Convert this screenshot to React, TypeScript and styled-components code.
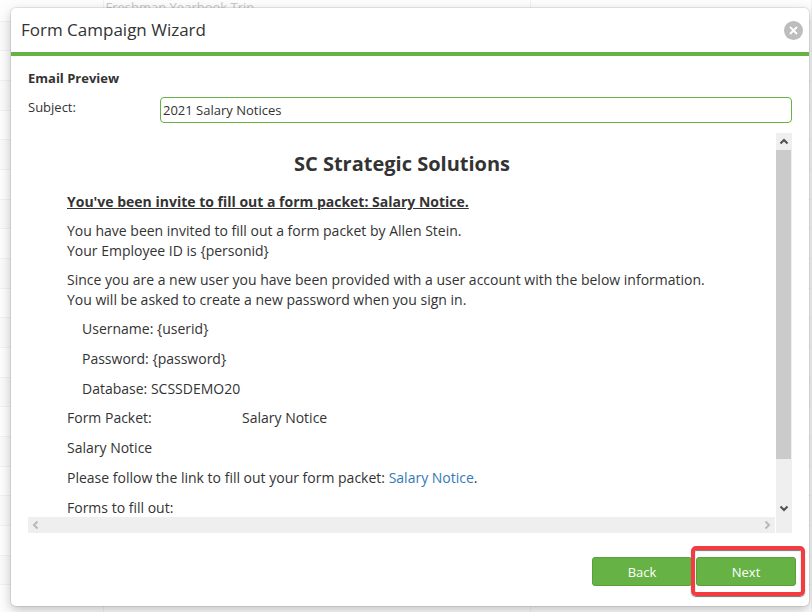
import React, { useState } from "react";
import styled, { createGlobalStyle } from "styled-components";

const green = "#66b245";
const ink = "#333333";

const GlobalStyle = createGlobalStyle`
  *, *::before, *::after { box-sizing: border-box; }
  html, body, #root { height: 100%; margin: 0; }
  body {
    overflow: hidden;
    background: #fdfdfd;
    color: ${ink};
    font-family: "Open Sans", "Noto Sans", sans-serif;
    font-size: 14px;
    line-height: 20px;
  }
  h1, h2, h3, p, dl, dd { margin: 0; }
`;

const Screen = styled.div`
  position: relative;
  height: 100%;
  overflow: hidden;
`;

const Backdrop = styled.div`
  height: 100%;
  overflow: hidden;
  display: flex;
  flex-direction: column;
  justify-content: flex-end;
`;

const ListTable = styled.table`
  width: 100%;
  margin-bottom: -3px;
  border-collapse: collapse;
  table-layout: fixed;
  font-size: 13px;
  color: #c8c8c8;

  tr { height: 30px; }
  tr:nth-child(3n) { height: 29px; }
  tr:nth-child(odd) { background: #fafafa; }
  td {
    padding: 0 2px;
    line-height: 16px;
    border-bottom: 1px solid #f1f1f1;
    border-right: 1px solid #f1f1f1;
    white-space: nowrap;
  }
  td:first-child { width: 103px; }
  td:nth-child(2) { width: 427px; }
`;

const Overlay = styled.div`
  position: absolute;
  inset: 0;
  display: flex;
  padding: 8px 3px 6px 11px;
`;

const Dialog = styled.section`
  flex: 1;
  min-width: 0;
  display: flex;
  flex-direction: column;
  background: #fff;
  border-radius: 5px;
  box-shadow: 0 0 0 1px rgba(0, 0, 0, 0.08), 0 4px 12px rgba(0, 0, 0, 0.24);
`;

const Header = styled.header`
  display: flex;
  align-items: center;
  justify-content: space-between;
  height: 48px;
  padding: 0 6px 0 10px;
  border-bottom: 4px solid ${green};
`;

const Title = styled.h1`
  font-size: 17px;
  line-height: 24px;
  font-weight: 400;
`;

const CloseButton = styled.button`
  display: flex;
  padding: 0;
  border: 0;
  background: none;
  cursor: pointer;
`;

const Body = styled.div`
  flex: 1;
  min-height: 0;
  display: flex;
  flex-direction: column;
  gap: 10px;
  padding: 13px 17px 0;
`;

const SectionTitle = styled.h2`
  font-size: 13px;
  line-height: 18px;
  font-weight: 700;
`;

const Field = styled.div`
  display: grid;
  grid-template-columns: 132px 1fr;
  align-items: start;
`;

const Label = styled.label`
  font-size: 13px;
  line-height: 20px;
`;

const SubjectInput = styled.input`
  width: 100%;
  height: 26px;
  padding: 0 2px;
  border: 1px solid ${green};
  border-radius: 4px;
  outline: none;
  background: #fff;
  color: ${ink};
  font: inherit;
  font-size: 13px;
`;

const Preview = styled.div`
  flex: 1;
  min-height: 0;
  display: grid;
  grid-template-columns: minmax(0, 1fr) 16px;
  grid-template-rows: minmax(0, 1fr) 16px;
`;

const Email = styled.article`
  overflow: hidden;
  display: flex;
  flex-direction: column;
  gap: 9px;
  padding: 17px 39px 0;
`;

const Company = styled.h2`
  margin-bottom: 5px;
  font-size: 20px;
  line-height: 28px;
  font-weight: 700;
  text-align: center;
`;

const Invite = styled.h3`
  font-size: 14px;
  line-height: 20px;
  font-weight: 700;
  text-decoration: underline;
`;

const Group = styled.div<{ $indent?: boolean }>`
  display: flex;
  flex-direction: column;
  gap: 10px;
  padding-left: ${(p) => (p.$indent ? "15px" : "0")};
`;

const PacketRow = styled.dl`
  display: grid;
  grid-template-columns: 175px 1fr;
`;

const Link = styled.a`
  color: #337ab7;
  text-decoration: none;
`;

const VerticalTrack = styled.div`
  grid-row: 1 / 3;
  grid-column: 2;
  display: flex;
  flex-direction: column;
  align-items: center;
  background: #efefef;
  padding: 1px 0 17px;
`;

const Thumb = styled.div`
  flex: 309;
  width: 100%;
  border-right: 1px solid #efefef;
  background: #cbcbcb;
`;

const TrackSpace = styled.div`
  flex: 41;
`;

const HorizontalTrack = styled.div`
  display: flex;
  justify-content: space-between;
  background: #efefef;
  border-right: 1px solid #fff;
`;

const ArrowBox = styled.button<{ $muted?: boolean }>`
  flex: none;
  display: flex;
  align-items: center;
  justify-content: center;
  width: 16px;
  height: 16px;
  padding: 0;
  border: 0;
  background: none;
  color: ${(p) => (p.$muted ? "#b9b9b9" : "#505050")};
`;

const Footer = styled.footer`
  display: flex;
  justify-content: flex-end;
  gap: 4px;
  padding: 24px 13px 20px;
`;

const ActionButton = styled.button`
  width: 100px;
  height: 29px;
  padding: 0;
  border: 1px solid #58a038;
  border-radius: 3px;
  background: ${green};
  color: #fff;
  font: inherit;
  font-size: 13px;
  cursor: pointer;
`;

const Highlighted = styled.div`
  position: relative;
  display: flex;

  &::after {
    content: "";
    position: absolute;
    inset: -11px -9px -10px -5px;
    border: 4px solid #f43b3f;
    border-radius: 5px;
    box-shadow: 0 1px 1px #777, inset 0 1px 1px #777;
    pointer-events: none;
  }
`;

const arrows = {
  up: "M1.5 6.5 L5 3 L8.5 6.5",
  down: "M1.5 3.5 L5 7 L8.5 3.5",
  left: "M6.5 1.5 L3 5 L6.5 8.5",
  right: "M3.5 1.5 L7 5 L3.5 8.5",
};

function Arrow({ to, muted }: { to: keyof typeof arrows; muted?: boolean }) {
  return (
    <ArrowBox type="button" aria-label={`Scroll ${to}`} $muted={muted}>
      <svg width="10" height="10" viewBox="0 0 10 10" fill="none" stroke="currentColor" strokeWidth="2">
        <path d={arrows[to]} />
      </svg>
    </ArrowBox>
  );
}

const rows = Array.from({ length: 22 }, (_, i) => (i === 1 ? "Freshman Yearbook Trip" : ""));

export default function App() {
  const [subject, setSubject] = useState("2021 Salary Notices");

  return (
    <Screen>
      <GlobalStyle />
      <Backdrop aria-hidden="true">
        <ListTable>
          <tbody>
            {rows.map((name, i) => (
              <tr key={i}>
                <td />
                <td>{name}</td>
                <td />
              </tr>
            ))}
          </tbody>
        </ListTable>
      </Backdrop>
      <Overlay>
        <Dialog role="dialog" aria-labelledby="wizard-title">
          <Header>
            <Title id="wizard-title">Form Campaign Wizard</Title>
            <CloseButton type="button" aria-label="Close">
              <svg width="20" height="20" viewBox="0 0 20 20">
                <circle cx="10.5" cy="10.5" r="9.5" fill="#bdbdbd" />
                <path d="M7 7 L14 14 M14 7 L7 14" stroke="#fff" strokeWidth="1.8" />
              </svg>
            </CloseButton>
          </Header>
          <Body>
            <SectionTitle>Email Preview</SectionTitle>
            <Field>
              <Label htmlFor="subject">Subject:</Label>
              <SubjectInput
                id="subject"
                autoFocus
                value={subject}
                onFocus={(e) => e.target.setSelectionRange(e.target.value.length, e.target.value.length)}
                onChange={(e) => setSubject(e.target.value)}
              />
            </Field>
            <Preview>
              <Email>
                <Company>SC Strategic Solutions</Company>
                <Invite>You've been invite to fill out a form packet: Salary Notice.</Invite>
                <p>
                  You have been invited to fill out a form packet by Allen Stein.
                  <br />
                  Your Employee ID is {"{personid}"}
                </p>
                <p>
                  Since you are a new user you have been provided with a user account with the below information.
                  <br />
                  You will be asked to create a new password when you sign in.
                </p>
                <Group $indent>
                  <p>Username: {"{userid}"}</p>
                  <p>Password: {"{password}"}</p>
                  <p>Database: SCSSDEMO20</p>
                </Group>
                <Group>
                  <PacketRow>
                    <dt>Form Packet:</dt>
                    <dd>Salary Notice</dd>
                  </PacketRow>
                  <p>Salary Notice</p>
                  <p>
                    Please follow the link to fill out your form packet: <Link href="#packet">Salary Notice</Link>.
                  </p>
                  <p>Forms to fill out:</p>
                </Group>
              </Email>
              <VerticalTrack>
                <Arrow to="up" />
                <Thumb />
                <TrackSpace />
                <Arrow to="down" />
              </VerticalTrack>
              <HorizontalTrack>
                <Arrow to="left" muted />
                <Arrow to="right" muted />
              </HorizontalTrack>
            </Preview>
          </Body>
          <Footer>
            <ActionButton type="button">Back</ActionButton>
            <Highlighted>
              <ActionButton type="button">Next</ActionButton>
            </Highlighted>
          </Footer>
        </Dialog>
      </Overlay>
    </Screen>
  );
}
